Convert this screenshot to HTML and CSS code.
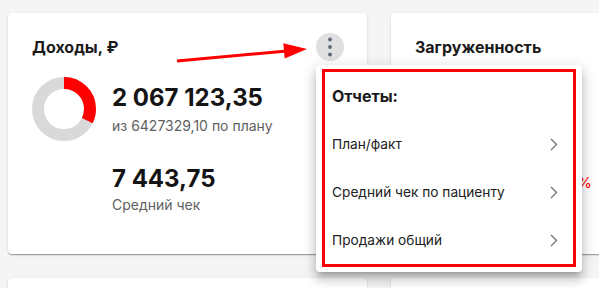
FILE: index.html
```html
<!DOCTYPE html>
<html lang="ru">
<head>
<meta charset="utf-8">
<title>Дашборд</title>
<link rel="stylesheet" href="styles.css">
</head>
<body>
<div class="page">
  <div class="grid">
    <section class="card">
      <div class="card-head">
        <h2 class="card-title">Доходы, ₽</h2>
        <button class="kebab" type="button" aria-label="Меню">
          <svg width="28" height="28" viewBox="0 0 28 28"><circle cx="14" cy="6.5" r="1.9"/><circle cx="14" cy="14" r="1.9"/><circle cx="14" cy="21.5" r="1.9"/></svg>
        </button>
      </div>
      <div class="metric">
        <svg class="donut" width="64" height="64" viewBox="0 0 64 64">
          <circle cx="32" cy="32" r="26" fill="none" stroke="#d9d9d9" stroke-width="12"/>
          <circle cx="32" cy="32" r="26" fill="none" stroke="#ff0000" stroke-width="12" stroke-dasharray="52.6 200" transform="rotate(-90 32 32)"/>
        </svg>
        <div class="values">
          <div class="big">2 067 123,35</div>
          <div class="sub">из 6427329,10 по плану</div>
        </div>
      </div>
      <div class="metric indent">
        <div class="values tight">
          <div class="big">7 443,75</div>
          <div class="sub">Средний чек</div>
        </div>
      </div>
    </section>
    <section class="card">
      <div class="card-head">
        <h2 class="card-title">Загруженность</h2>
      </div>
      <div class="load-row">
        <span class="pct">36,3 %</span>
      </div>
    </section>
    <section class="card"></section>
    <section class="card"></section>
  </div>

  <div class="menu">
    <div class="menu-box">
      <div class="menu-title">Отчеты:</div>
      <div class="menu-item"><span>План/факт</span><svg class="chev" width="8" height="13" viewBox="0 0 8 13"><path d="M1 1l5.5 5.5L1 12"/></svg></div>
      <div class="menu-item"><span>Средний чек по пациенту</span><svg class="chev" width="8" height="13" viewBox="0 0 8 13"><path d="M1 1l5.5 5.5L1 12"/></svg></div>
      <div class="menu-item"><span>Продажи общий</span><svg class="chev" width="8" height="13" viewBox="0 0 8 13"><path d="M1 1l5.5 5.5L1 12"/></svg></div>
    </div>
  </div>

  <svg class="arrow" width="599" height="288" viewBox="0 0 599 288">
    <line x1="177" y1="61" x2="287" y2="51" stroke="#ff0000" stroke-width="3"/>
    <polygon points="307,49 283.3,43.2 284.7,58.5" fill="#ff0000"/>
  </svg>
</div>
</body>
</html>
```

FILE: styles.css
```css
html, body {
  margin: 0;
  padding: 0;
  background: #f5f5f5;
  font-family: Inter, Roboto, "Liberation Sans", sans-serif;
  color: #212121;
  overflow: hidden;
}

.page {
  position: relative;
  width: 599px;
  height: 288px;
  overflow: hidden;
}

.grid {
  display: grid;
  grid-template-columns: 359px 359px;
  grid-auto-rows: 241px;
  gap: 24px;
  padding: 13px 0 0 8px;
}

.card {
  background: #fff;
  border-radius: 4px;
  box-shadow: 0 2px 1px -1px rgba(0,0,0,.2), 0 1px 1px 0 rgba(0,0,0,.14), 0 1px 3px 0 rgba(0,0,0,.12);
  padding: 20px 23px 0 24px;
  box-sizing: border-box;
}

.card-head {
  display: flex;
  align-items: center;
  justify-content: space-between;
  height: 28px;
}

.card-title {
  margin: 0;
  font-size: 16px;
  font-weight: 700;
  line-height: 22px;
  color: #1a1a1a;
}

.kebab {
  width: 28px;
  height: 28px;
  border: 0;
  padding: 0;
  border-radius: 50%;
  background: #e0e0e0;
  display: flex;
  align-items: center;
  justify-content: center;
}

.kebab svg {
  fill: #5d6775;
}

.metric {
  display: flex;
  align-items: center;
  gap: 16px;
  margin-top: 16px;
}

.metric.indent {
  padding-left: 80px;
  margin-top: 22px;
}

.donut {
  display: block;
  flex: none;
}

.values {
  display: flex;
  flex-direction: column;
  gap: 2px;
}

.values.tight {
  gap: 0;
}

.big {
  font-size: 24px;
  font-weight: 700;
  line-height: 32px;
  color: #141414;
}

.sub {
  font-size: 14px;
  line-height: 20px;
  color: #5f5f5f;
}

.load-row {
  display: flex;
  justify-content: flex-end;
  align-items: center;
  width: 97px;
  margin: 112px 0 0 80px;
}

.pct {
  color: #ff0000;
  font-size: 15px;
}

.menu {
  position: absolute;
  left: 316px;
  top: 65px;
  width: 266px;
  height: 207px;
  box-sizing: border-box;
  padding: 4px 6px 5px 6px;
  background: #fff;
  border-radius: 4px;
  box-shadow: 0 5px 5px -3px rgba(0,0,0,.2), 0 8px 10px 1px rgba(0,0,0,.14), 0 3px 14px 2px rgba(0,0,0,.12);
}

.menu-box {
  border: 3px solid #ff0000;
  height: 100%;
  box-sizing: border-box;
}

.menu-title {
  height: 48px;
  display: flex;
  align-items: center;
  padding-left: 7px;
  font-size: 16px;
  font-weight: 700;
  color: #1a1a1a;
}

.menu-item {
  height: 48px;
  display: flex;
  align-items: center;
  justify-content: space-between;
  padding: 0 15px 0 7px;
  font-size: 13.7px;
  color: #212121;
}

.chev {
  fill: none;
  stroke: #757575;
  stroke-width: 1.4;
}

.arrow {
  position: absolute;
  left: 0;
  top: 0;
  pointer-events: none;
}
```
